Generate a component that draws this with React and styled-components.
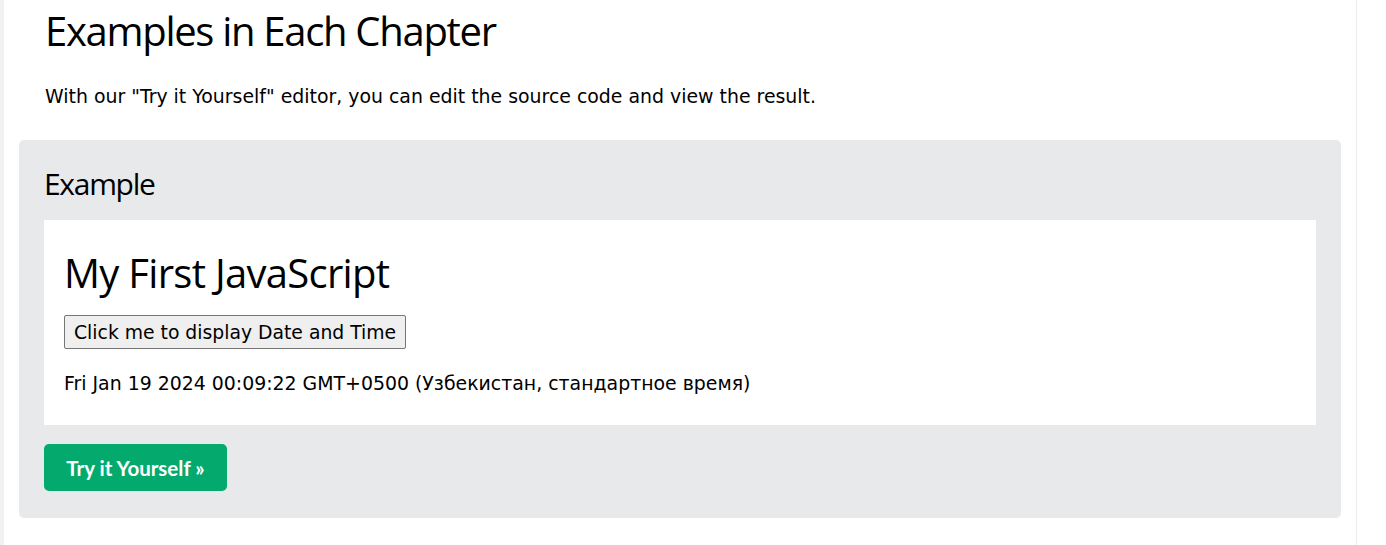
import styled, { createGlobalStyle } from 'styled-components';

const GlobalStyle = createGlobalStyle`
    html, body {
        margin: 0;
        padding: 0;
        background: #ffffff;
    }
`

export default function App() {
    return (
        <>
        <GlobalStyle/>
        <Page>
            <SideStrip/>
            <Main>
                <Title>Examples in Each Chapter</Title>
                <Intro>With our "Try it Yourself" editor, you can edit the source code and view the result.</Intro>

                <ExampleBox>
                    <BoxTitle>Example</BoxTitle>
                    <Result>
                        <ResultTitle>My First JavaScript</ResultTitle>
                        <DateButton type="button">Click me to display Date and Time</DateButton>
                        <DateText>Fri Jan 19 2024 00:09:22 GMT+0500 (Узбекистан, стандартное время)</DateText>
                    </Result>
                    <TryButton>Try it Yourself »</TryButton>
                </ExampleBox>
            </Main>
            <Aside/>
        </Page>
        </>
    );
}

const Page = styled.div`
    display: flex;
    min-height: 545px;
`

const SideStrip = styled.div`
    width: 4px;
    background-color: #f1f1f1;
`

const Main = styled.div`
    width: 1322px;
    padding: 0 15px;
    border-right: 1px solid #ececec;
`

const Aside = styled.div`
    flex: 1;
    background-color: #ffffff;
`

const Title = styled.h2`
    margin: 0;
    padding: 4px 0 0 26px;
    font-family: "Open Sans", sans-serif;
    font-weight: 400;
    font-size: 40px;
    line-height: 54px;
    letter-spacing: -1.3px;
    color: #000000;
`

const Intro = styled.p`
    margin: 0;
    padding: 26px 0 0 26px;
    font-family: "DejaVu Sans", Verdana, sans-serif;
    font-size: 18.9px;
    line-height: 24px;
    color: #000000;
`

const ExampleBox = styled.div`
    margin-top: 32px;
    padding: 24px 25px 27px;
    background-color: #e7e9eb;
    border-radius: 5px;
`

const BoxTitle = styled.h3`
    margin: 0;
    font-family: "Open Sans", sans-serif;
    font-weight: 400;
    font-size: 30px;
    line-height: 40px;
    letter-spacing: -1.3px;
    color: #000000;
`

const Result = styled.div`
    margin-top: 16px;
    padding: 26px 20px 30px;
    background-color: #ffffff;
`

const ResultTitle = styled.h2`
    margin: 0;
    font-family: "Open Sans", sans-serif;
    font-weight: 400;
    font-size: 40px;
    line-height: 54px;
    letter-spacing: -0.7px;
    color: #000000;
`

const DateButton = styled.button`
    display: block;
    margin-top: 15px;
    height: 34px;
    padding: 0 9px;
    background-color: #efefef;
    border: 1px solid #767676;
    border-radius: 2px;
    font-family: "DejaVu Sans", Verdana, sans-serif;
    font-size: 18.8px;
    color: #000000;
`

const DateText = styled.p`
    margin: 22px 0 0;
    font-family: "DejaVu Sans", Verdana, sans-serif;
    font-size: 18.9px;
    line-height: 24px;
    color: #000000;
`

const TryButton = styled.div`
    display: inline-flex;
    align-items: center;
    justify-content: center;
    margin-top: 19px;
    width: 183px;
    height: 47px;
    background-color: #04aa6d;
    border-radius: 5px;
    font-family: Lato, sans-serif;
    font-weight: 700;
    font-size: 20.5px;
    color: #ffffff;
`
